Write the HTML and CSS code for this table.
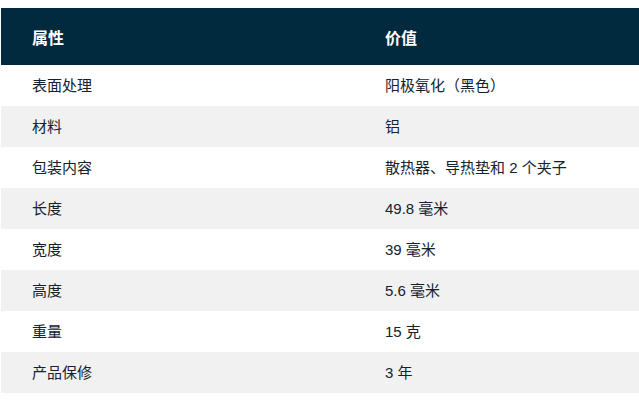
FILE: index.html
```html
<!DOCTYPE html>
<html lang="zh">
<head>
<meta charset="utf-8">
<link rel="stylesheet" href="styles.css">
</head>
<body>
<table class="spec">
  <thead>
    <tr><th class="c1">属性</th><th>价值</th></tr>
  </thead>
  <tbody>
    <tr><td class="c1">表面处理</td><td>阳极氧化（黑色）</td></tr>
    <tr><td class="c1">材料</td><td>铝</td></tr>
    <tr><td class="c1">包装内容</td><td>散热器、导热垫和 2 个夹子</td></tr>
    <tr><td class="c1">长度</td><td>49.8 毫米</td></tr>
    <tr><td class="c1">宽度</td><td>39 毫米</td></tr>
    <tr><td class="c1">高度</td><td>5.6 毫米</td></tr>
    <tr><td class="c1">重量</td><td>15 克</td></tr>
    <tr><td class="c1">产品保修</td><td>3 年</td></tr>
  </tbody>
</table>
</body>
</html>
```

FILE: styles.css
```css
html, body {
  margin: 0;
  padding: 0;
  background: #ffffff;
}
body {
  padding: 8px 0 0 1px;
  font-family: "Liberation Sans", "Noto Sans CJK SC", sans-serif;
}
.spec {
  width: 638px;
  border-collapse: collapse;
  table-layout: fixed;
}
.spec .c1 {
  width: 353px;
}
.spec th {
  background: #012a3e;
  color: #ffffff;
  font-size: 16px;
  font-weight: bold;
  text-align: left;
  height: 57px;
  padding: 0 0 0 31px;
  box-sizing: border-box;
}
.spec td {
  color: #14222e;
  font-size: 15px;
  line-height: 20px;
  height: 41px;
  padding: 0 0 0 31px;
  box-sizing: border-box;
  vertical-align: middle;
}
.spec tbody tr:nth-child(even) td {
  background: #f1f1f1;
}
```
